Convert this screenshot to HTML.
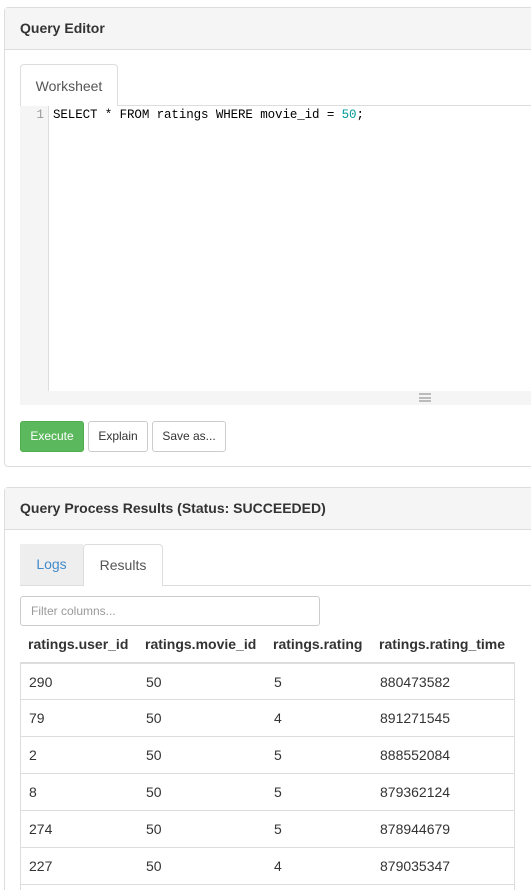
<!DOCTYPE html>
<html><head><style>
html,body{margin:0;width:531px;height:890px;overflow:hidden}
body{background:#fff;font-family:"Liberation Sans",Arial,sans-serif;font-size:14px;color:#333;position:relative}
.a{position:absolute;box-sizing:border-box}
.panel{border:1px solid #ddd;border-right:none;border-radius:4px 0 0 4px;left:4px;width:540px}
.ph{background:#f5f5f5;border-bottom:1px solid #ddd;font-weight:bold;font-size:14px;padding:0 15px;height:41px;line-height:40px}
.btn{border:1px solid #ccc;border-radius:3px;height:31px;line-height:29px;text-align:center;font-size:12px;background:#fff;color:#333}
.row{position:absolute;left:20px;width:495px;height:37px;line-height:37px;border-left:1px solid #ddd;border-right:1px solid #ddd;border-bottom:1px solid #ddd;box-sizing:border-box}
.row span{position:absolute;top:0}
.c1{left:8px}.c2{left:125px}.c3{left:253px}.c4{left:359px}
</style></head><body>
<div class="a panel" style="top:7px;height:460px">
<div class="ph">Query Editor</div>
</div>
<div class="a" style="left:20px;top:105px;width:520px;border-top:1px solid #ddd"></div>
<div class="a" style="left:20px;top:64px;width:98px;height:42px;border:1px solid #ddd;border-bottom:none;border-radius:4px 4px 0 0;background:#fff;text-align:center;line-height:42px;color:#555">Worksheet</div>
<div class="a" style="left:20px;top:106px;width:520px;height:299px;background:#f5f5f5"></div>
<div class="a" style="left:48px;top:106px;width:492px;height:285px;background:#fff;border-left:1px solid #ddd"></div>
<div class="a" style="left:20px;top:108px;width:24px;text-align:right;font-family:'Liberation Mono',monospace;font-size:12.5px;color:#999">1</div>
<div class="a" style="left:53px;top:108px;font-family:'Liberation Mono',monospace;font-size:12.5px;letter-spacing:-0.1px;color:#000;white-space:pre">SELECT * FROM ratings WHERE movie_id = <span style="color:#099">50</span>;</div>
<div class="a" style="left:419px;top:393px;width:12px;height:9px;border-top:2px solid #bbb;border-bottom:2px solid #bbb"><div style="margin-top:1.5px;border-top:2px solid #bbb"></div></div>
<div class="a btn" style="left:20px;top:421px;width:64px;background:#5cb85c;border-color:#4cae4c;color:#fff">Execute</div>
<div class="a btn" style="left:88px;top:421px;width:60px">Explain</div>
<div class="a btn" style="left:152px;top:421px;width:74px">Save as...</div>

<div class="a panel" style="top:487px;height:420px">
<div class="ph">Query Process Results (Status: SUCCEEDED)</div>
</div>
<div class="a" style="left:20px;top:585px;width:520px;border-top:1px solid #ddd"></div>
<div class="a" style="left:20px;top:544px;width:63px;height:41px;background:#eee;text-align:center;line-height:41px;color:#428bca">Logs</div>
<div class="a" style="left:83px;top:544px;width:80px;height:42px;border:1px solid #ddd;border-bottom:none;border-radius:4px 4px 0 0;background:#fff;text-align:center;line-height:41px;color:#555">Results</div>
<div class="a" style="left:20px;top:596px;width:300px;height:30px;border:1px solid #ccc;border-radius:3px;padding-left:10px;line-height:28px;font-size:12px;color:#999">Filter columns...</div>
<div class="row" style="top:626px;border:none;font-weight:bold;height:36px;line-height:36px"><span class="c1">ratings.user_id</span><span class="c2">ratings.movie_id</span><span class="c3">ratings.rating</span><span class="c4">ratings.rating_time</span></div>
<div class="a" style="left:20px;top:662px;width:495px;border-top:2px solid #ddd"></div>
<div class="row" style="top:664px;height:36px;line-height:36px"><span class="c1">290</span><span class="c2">50</span><span class="c3">5</span><span class="c4">880473582</span></div>
<div class="row" style="top:700px"><span class="c1">79</span><span class="c2">50</span><span class="c3">4</span><span class="c4">891271545</span></div>
<div class="row" style="top:737px"><span class="c1">2</span><span class="c2">50</span><span class="c3">5</span><span class="c4">888552084</span></div>
<div class="row" style="top:774px"><span class="c1">8</span><span class="c2">50</span><span class="c3">5</span><span class="c4">879362124</span></div>
<div class="row" style="top:811px"><span class="c1">274</span><span class="c2">50</span><span class="c3">5</span><span class="c4">878944679</span></div>
<div class="row" style="top:848px"><span class="c1">227</span><span class="c2">50</span><span class="c3">4</span><span class="c4">879035347</span></div>
<div class="row" style="top:885px"></div>
</body></html>
